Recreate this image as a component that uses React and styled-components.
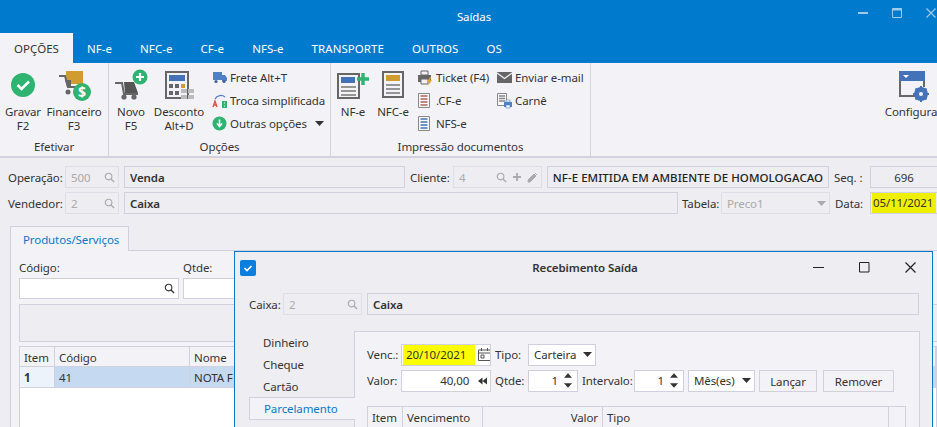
import React from 'react';
import styled, { createGlobalStyle } from 'styled-components';

const GlobalStyle = createGlobalStyle`
  html, body {
    margin: 0;
    padding: 0;
    overflow: hidden;
  }
  body {
    font-family: "Noto Sans", "Open Sans", sans-serif;
    font-size: 11.5px;
    letter-spacing: -0.1px;
    color: #333;
  }
  * {
    box-sizing: border-box;
  }
`;

const Page = styled.div`
  position: relative;
  width: 937px;
  height: 427px;
  overflow: hidden;
  background: #ededf2;
`;

const TitleBar = styled.div`
  position: relative;
  height: 33px;
  background: #007acc;
  color: #fff;
  display: flex;
  align-items: center;
  justify-content: center;
  padding-left: 11px;
`;

const WindowButtons = styled.div`
  position: absolute;
  top: 7px;
  left: 858px;
  display: flex;
  gap: 24px;
  color: #9fcaea;
`;

const TabStrip = styled.div`
  height: 30px;
  background: #007acc;
  display: flex;
  letter-spacing: 0.05px;
`;

const RibbonTab = styled.div`
  padding: 0 14px;
  display: flex;
  align-items: center;
  color: ${(p) => (p.$active ? '#333' : '#fff')};
  background: ${(p) => (p.$active ? '#f3f3f7' : 'transparent')};
`;

const Ribbon = styled.div`
  height: 95px;
  background: #f3f3f7;
  border-bottom: 2px solid #d3d3e0;
  display: flex;
  overflow: hidden;
`;

const Group = styled.div`
  width: ${(p) => p.$w}px;
  flex: none;
  display: flex;
  flex-direction: column;
  border-right: ${(p) => (p.$open ? 'none' : '1px solid #d3d3e0')};
`;

const GroupBody = styled.div`
  height: 75px;
  display: flex;
  padding-left: ${(p) => p.$pad || 0}px;
`;

const GroupCaption = styled.div`
  height: 18px;
  text-align: center;
  line-height: 18px;
`;

const LargeButton = styled.div`
  width: ${(p) => p.$w}px;
  flex: none;
  padding-top: 5px;
  display: flex;
  flex-direction: column;
  align-items: center;
  text-align: center;
  line-height: 14px;
  white-space: nowrap;
  svg {
    display: block;
    margin-bottom: 5px;
    overflow: visible;
  }
`;

const SmallColumn = styled.div`
  width: ${(p) => p.$w}px;
  flex: none;
  padding: 3px 0 0 ${(p) => p.$pad || 0}px;
  display: flex;
  flex-direction: column;
`;

const SmallItem = styled.div`
  height: 23px;
  display: flex;
  align-items: center;
  gap: 2px;
  white-space: nowrap;
  svg {
    flex: none;
  }
`;

const HeaderForm = styled.div`
  padding: 8px 0 0 8px;
  height: 68px;
  display: flex;
  flex-direction: column;
  gap: 4px;
`;

const FormRow = styled.div`
  height: 22px;
  display: flex;
  align-items: center;
  white-space: nowrap;
`;

const Label = styled.span`
  width: ${(p) => p.$w}px;
  flex: none;
`;

const Field = styled.div`
  width: ${(p) => p.$w}px;
  height: 22px;
  flex: none;
  margin-right: ${(p) => p.$mr || 0}px;
  padding: 0 ${(p) => (p.$tight ? 1 : 5)}px;
  display: flex;
  align-items: center;
  justify-content: ${(p) => p.$justify || 'flex-start'};
  gap: ${(p) => p.$gap || 3}px;
  border: 1px solid ${(p) => (p.$soft ? '#dedee8' : '#d0d0de')};
  background: ${(p) => p.$bg || 'transparent'};
  color: ${(p) => p.$color || 'inherit'};
  font-weight: ${(p) => p.$weight || 400};
  letter-spacing: ${(p) => p.$spacing || 'inherit'};
  overflow: hidden;
  > svg:last-child {
    margin-right: -2px;
  }
`;

const Grow = styled.span`
  flex: 1;
`;

const Highlight = styled.span`
  background: ${(p) => p.$bg};
  color: #333;
  height: 20px;
  line-height: 19px;
  padding-left: ${(p) => p.$indent}px;
  flex: 1;
`;

const WorkArea = styled.div`
  padding-left: 10px;
`;

const DocTab = styled.div`
  width: 119px;
  height: 25px;
  margin-bottom: -1px;
  position: relative;
  z-index: 1;
  padding-left: 12px;
  display: flex;
  align-items: center;
  color: #0a78c8;
  background: #f3f3f7;
  border: 1px solid #d0d0de;
  border-bottom: none;
`;

const DocPanel = styled.div`
  height: 180px;
  padding: 5px 0 0 8px;
  background: #f3f3f7;
  border: 1px solid #d0d0de;
  border-right: none;
`;

const LabelRow = styled.div`
  display: flex;
  height: 22px;
  align-items: center;
`;

const InputRow = styled.div`
  display: flex;
  gap: 4px;
  height: 21px;
  margin-bottom: 5px;
  > * {
    height: 21px;
  }
`;

const GrayBox = styled.div`
  height: 38px;
  margin-bottom: 4px;
  background: #ededf2;
  border: 1px solid #d0d0de;
  border-right: none;
`;

const GridCell = styled.div`
  width: ${(p) => p.$w}px;
  flex: ${(p) => (p.$w ? 'none' : 1)};
  padding: 0 4px;
  display: flex;
  align-items: center;
  justify-content: ${(p) => (p.$right ? 'flex-end' : 'flex-start')};
  border-right: 1px solid #d0d0de;
  background: ${(p) => p.$bg || 'transparent'};
  font-weight: ${(p) => (p.$bold ? 700 : 400)};
  white-space: nowrap;
`;

const GridRow = styled.div`
  height: 21px;
  display: flex;
  background: ${(p) => p.$bg || 'transparent'};
  border: 1px solid #d0d0de;
  border-top-width: ${(p) => (p.$first ? 1 : 0)}px;
  ${GridCell} {
    padding-top: 1px;
  }
`;

const GridBody = styled.div`
  height: 60px;
  background: #fff;
  border: 1px solid #d0d0de;
  border-top: none;
`;

const Modal = styled.div`
  position: absolute;
  left: 234px;
  top: 251px;
  width: 699px;
  height: 190px;
  background: #ededf2;
  border: 1px solid #0a78c8;
`;

const ModalTitle = styled.div`
  position: relative;
  height: 31px;
  display: flex;
  align-items: center;
  justify-content: center;
  padding-left: 3px;
  font-weight: 600;
  color: #333;
`;

const AppBadge = styled.div`
  position: absolute;
  left: 5px;
  top: 8px;
`;

const ModalControls = styled.div`
  position: absolute;
  left: 578px;
  top: 10px;
  display: flex;
  gap: 35px;
  color: #222;
`;

const ModalForm = styled.div`
  padding: 10px 0 0 14px;
`;

const PaymentArea = styled.div`
  display: flex;
  margin-top: 16px;
`;

const SideMenu = styled.div`
  width: 106px;
  flex: none;
  display: flex;
  flex-direction: column;
  position: relative;
  z-index: 1;
`;

const SideItem = styled.div`
  height: ${(p) => (p.$active ? 23 : 22)}px;
  padding-left: 14px;
  display: flex;
  align-items: center;
  color: ${(p) => (p.$active ? '#0a78c8' : 'inherit')};
  background: ${(p) => (p.$active ? '#f3f3f7' : 'transparent')};
  border: ${(p) => (p.$active ? '1px solid #d0d0de' : 'none')};
  border-right: none;
  margin-right: ${(p) => (p.$active ? 0 : 1)}px;
`;

const PaymentPanel = styled.div`
  width: 566px;
  height: 120px;
  flex: none;
  margin-left: -1px;
  padding: 12px 0 0 12px;
  background: #f3f3f7;
  border: 1px solid #d0d0de;
`;

const PaymentRow = styled.div`
  height: 22px;
  margin-bottom: 4px;
  display: flex;
  align-items: center;
  white-space: nowrap;
  ${Label}, ${Field} {
    padding-bottom: 1px;
  }
`;

const Button = styled.div`
  width: ${(p) => p.$w}px;
  height: 22px;
  flex: none;
  margin-right: ${(p) => p.$mr || 0}px;
  display: flex;
  align-items: center;
  justify-content: center;
  border: 1px solid #d0d0de;
  background: #f3f3f7;
`;

const SpinArrows = styled.div`
  display: flex;
  flex-direction: column;
  gap: 5px;
  margin-left: 3px;
  svg {
    display: block;
  }
`;

const InnerGrid = styled.div`
  width: 539px;
  margin-top: 14px;
  height: 40px;
  border: 1px solid #d0d0de;
  display: flex;
  ${GridCell} {
    align-items: flex-start;
    padding-top: 3px;
  }
`;

const BLUE = '#4472b8';

const Search = ({ color = '#aaa' }) => (
  <svg width="11" height="11" viewBox="0 0 12 12" fill="none" stroke={color} strokeWidth="1.2">
    <circle cx="5" cy="5" r="3.6" />
    <path d="M7.6 7.6 11 11" strokeWidth="1.5" />
  </svg>
);

const Caret = ({ color = '#333', w = 9 }) => (
  <svg width={w} height="5" viewBox="0 0 9 5">
    <path d="M0 0h9L4.5 5z" fill={color} />
  </svg>
);

const CheckCircle = () => (
  <svg width="26" height="32" viewBox="0 0 26 32">
    <circle cx="13" cy="17" r="12" fill="#2eb371" />
    <path d="M7.5 17l4 4 7.5-7.500" fill="none" stroke="#fff" strokeWidth="2.6" />
  </svg>
);

const FinanceIcon = () => (
  <svg width="34" height="32" viewBox="0 0 34 32">
    <rect x="9" y="3" width="17" height="13" fill="#d09c30" />
    <path d="M2 8h6l3 11h9" fill="none" stroke="#666" strokeWidth="2" />
    <path d="M8 12h6v7h-4z" fill="#666" />
    <circle cx="11" cy="24" r="2.5" fill="#666" />
    <circle cx="25" cy="24" r="9" fill="#2eb371" />
    <text x="25" y="29" textAnchor="middle" fill="#fff" fontSize="14" fontWeight="700" fontFamily="Noto Sans">$</text>
  </svg>
);

const NewCartIcon = () => (
  <svg width="34" height="32" viewBox="0 0 34 32">
    <path d="M1 15h7l2 11h14" fill="none" stroke="#666" strokeWidth="2" />
    <path d="M10 14h10l4 11H11z" fill="#555" />
    <circle cx="10" cy="29" r="2.6" fill="#666" />
    <circle cx="20" cy="29" r="2.6" fill="#666" />
    <circle cx="26" cy="9" r="7.500" fill="#2eb371" />
    <path d="M26 5v8M22 9h8" stroke="#fff" strokeWidth="2.2" />
  </svg>
);

const CalculatorIcon = () => (
  <svg width="32" height="32" viewBox="0 0 32 32">
    <path d="M3 4h22v26H3z" fill="#f3f3f7" stroke="#666" strokeWidth="2" />
    <rect x="6" y="7" width="16" height="6" fill={BLUE} />
    {[6, 12, 18].map((x) => <rect key={x} x={x} y="16" width="4" height="4" fill={x === 18 ? '#d09c30' : '#666'} />)}
    {[6, 12].map((x) => <rect key={x} x={x} y="23" width="4" height="4" fill="#666" />)}
    {[18, 25].map((x) => <rect key={x} x={x} y="21" width="6" height="4" fill="#bbb" />)}
    {[18, 25].map((x) => <rect key={x} x={x} y="27" width="6" height="4" fill="#bbb" />)}
  </svg>
);

const DocLines = ({ x, y, w, gap = 4, n = 3, color = '#777' }) => (
  <path
    d={Array.from({ length: n }, (_, i) => `M${x} ${y + i * gap}h${w}`).join('')}
    stroke={color}
    strokeWidth="1.6"
  />
);

const NfeIcon = () => (
  <svg width="33" height="32" viewBox="0 0 33 32">
    <path d="M1 6h21v24H1z" fill="#f3f3f7" stroke="#666" strokeWidth="2" />
    <rect x="4" y="9" width="14" height="6" fill={BLUE} />
    <DocLines x={4} y={19} w={15} />
    <path d="M26 5v12M20 11h12" stroke="#2eb371" strokeWidth="3.4" />
  </svg>
);

const NfceIcon = () => (
  <svg width="24" height="32" viewBox="0 0 24 32">
    <path d="M2 4h20v25H2z" fill="#f3f3f7" stroke="#666" strokeWidth="2" />
    <rect x="5" y="7" width="14" height="6" fill="#d09c30" />
    <DocLines x={5} y={17} w={14} />
  </svg>
);

const ConfigIcon = () => (
  <svg width="28" height="32" viewBox="0 0 28 32">
    <path d="M3 8v20h16" fill="none" stroke="#666" strokeWidth="2" />
    <path d="M27 8v11" stroke="#666" strokeWidth="2" />
    <rect x="2" y="3" width="26" height="10" fill={BLUE} />
    <path d="M6 7h6l-3 3z" fill="#fff" />
    <circle cx="24" cy="26" r="5" fill="none" stroke={BLUE} strokeWidth="4" />
    <path d="M24 18v16M16 26h16M18.500 20.500l11 11M29.500 20.500l-11 11" stroke={BLUE} strokeWidth="2" />
    <circle cx="24" cy="26" r="2" fill="#f3f3f7" />
  </svg>
);

const TruckIcon = () => (
  <svg width="16" height="13" viewBox="0 0 16 13">
    <path d="M1 1h9v8H1z" fill="#4f7fc4" />
    <path d="M10 4h3l2 3v3h-5z" fill="#4f7fc4" />
    <circle cx="4" cy="10.500" r="1.600" fill="#3b5f99" />
    <circle cx="12" cy="10.500" r="1.600" fill="#3b5f99" />
  </svg>
);

const SwapIcon = () => (
  <svg width="16" height="16" viewBox="0 0 16 16">
    <path d="M3 6C5 2 10 1.500 13 4" fill="none" stroke="#4f7fc4" strokeWidth="1.3" />
    <path d="M1 14l2-6 2 6M1.800 12h2.400" fill="none" stroke="#d9533f" strokeWidth="1.3" />
    <rect x="10" y="8" width="5" height="7" fill="#2eb371" />
    <path d="M12 10h1M12 13h1" stroke="#fff" />
  </svg>
);

const DownCircle = () => (
  <svg width="16" height="15" viewBox="0 0 16 15">
    <circle cx="7.500" cy="7.500" r="7" fill="#2eb371" />
    <path d="M7.500 3.500v6M5 7.500l2.500 3 2.500-3" fill="none" stroke="#fff" strokeWidth="1.600" />
  </svg>
);

const PrinterIcon = () => (
  <svg width="17" height="16" viewBox="0 0 17 16">
    <path d="M4 1h7v4H4z" fill="#f3f3f7" stroke="#666" />
    <path d="M1 5h13v7H1z" fill="#666" />
    <path d="M4 9h7v5H4z" fill="#f3f3f7" stroke="#666" />
    <path d="M13 7l-3 5h2l-1 4 4-6h-2l1-3z" fill="#e6a72c" />
  </svg>
);

const TinyDoc = ({ accent, n = 4 }) => (
  <svg width="14" height="15" viewBox="0 0 14 15">
    <path d="M1.500 .5h11v14h-11z" fill="#f8f8fb" stroke="#888" />
    <DocLines x={3.500} y={3} w={7} gap={3} n={n} color={accent} />
  </svg>
);

const MailIcon = () => (
  <svg width="16" height="11" viewBox="0 0 16 11">
    <rect width="15" height="11" fill="#666" />
    <path d="M0 1l7.500 5.500L15 1" fill="none" stroke="#f3f3f7" strokeWidth="1.200" />
  </svg>
);

const CarneIcon = () => (
  <svg width="16" height="16" viewBox="0 0 16 16">
    <path d="M.5.5h9v12h-9z" fill="#f8f8fb" stroke="#888" />
    <DocLines x={2} y={3} w={6} gap={2.500} color="#888" />
    <path d="M7 9h8v5H7z" fill="#4f7fc4" />
    <path d="M9 7h4v2H9zM9 12h4v3H9z" fill="#fff" stroke="#4f7fc4" strokeWidth=".6" />
  </svg>
);

const PlusGlyph = () => (
  <svg width="10" height="10" viewBox="0 0 10 10">
    <path d="M5 1v8M1 5h8" stroke="#aaa" strokeWidth="1.800" />
  </svg>
);

const PencilGlyph = () => (
  <svg width="11" height="11" viewBox="0 0 11 11">
    <path d="M1 8l6-6 2 2-6 6H1z M8 1l2 2" fill="#aaa" stroke="#aaa" />
  </svg>
);

const CalendarIcon = () => (
  <svg width="13" height="13" viewBox="0 0 13 13" fill="none" stroke="#555">
    <path d="M.5 2h12v10.500H.5zM.5 5h12M3.500 0v3M9.500 0v3" />
    <path d="M3 7h3v3H3z" />
  </svg>
);

const SpinUp = () => (
  <svg width="8" height="5" viewBox="0 0 9 5"><path d="M0 5h9L4.500 0z" fill="#333" /></svg>
);

const Rewind = () => (
  <svg width="9" height="8" viewBox="0 0 10 8">
    <path d="M5 0v8L0 4zM10 0v8L5 4z" fill="#333" />
  </svg>
);

const Spinner = ({ w, value, mr }) => (
  <Field $w={w} $mr={mr} $bg="#fff" $justify="flex-end">
    {value}
    <SpinArrows>
      <SpinUp />
      <Caret w={8} />
    </SpinArrows>
  </Field>
);

export default function App() {
  return (
    <Page>
      <GlobalStyle />
      <TitleBar>
        Saídas
        <WindowButtons>
          <svg width="10" height="12" viewBox="0 0 10 12"><path d="M0 6h10" stroke="currentColor" strokeWidth="2" /></svg>
          <svg width="10" height="12" viewBox="0 0 10 12" fill="none" stroke="currentColor"><path d="M.5 1.500h9v9h-9z" /><path d="M0 2.500h10" strokeWidth="2" /></svg>
          <svg width="10" height="12" viewBox="0 0 10 12" fill="none" stroke="currentColor" strokeWidth="1.200"><path d="M.5 1.500l9 9M9.500 1.500l-9 9" /></svg>
        </WindowButtons>
      </TitleBar>
      <TabStrip>
        <RibbonTab $active>OPÇÕES</RibbonTab>
        {['NF-e', 'NFC-e', 'CF-e', 'NFS-e', 'TRANSPORTE', 'OUTROS', 'OS'].map((t) => (
          <RibbonTab key={t}>{t}</RibbonTab>
        ))}
      </TabStrip>
      <Ribbon>
        <Group $w={109}>
          <GroupBody $pad={2}>
            <LargeButton $w={42}><CheckCircle />Gravar<br />F2</LargeButton>
            <LargeButton $w={60}><FinanceIcon />Financeiro<br />F3</LargeButton>
          </GroupBody>
          <GroupCaption>Efetivar</GroupCaption>
        </Group>
        <Group $w={222}>
          <GroupBody $pad={3}>
            <LargeButton $w={38}><NewCartIcon />Novo<br />F5</LargeButton>
            <LargeButton $w={58}><CalculatorIcon />Desconto<br />Alt+D</LargeButton>
            <SmallColumn $w={120} $pad={4}>
              <SmallItem><TruckIcon />Frete Alt+T</SmallItem>
              <SmallItem><SwapIcon />Troca simplificada</SmallItem>
              <SmallItem><DownCircle />Outras opções&nbsp;&nbsp;<Caret /></SmallItem>
            </SmallColumn>
          </GroupBody>
          <GroupCaption>Opções</GroupCaption>
        </Group>
        <Group $w={260}>
          <GroupBody $pad={1}>
            <LargeButton $w={42}><NfeIcon />NF-e</LargeButton>
            <LargeButton $w={38}><NfceIcon />NFC-e</LargeButton>
            <SmallColumn $w={85} $pad={5}>
              <SmallItem><PrinterIcon />Ticket (F4)</SmallItem>
              <SmallItem><TinyDoc accent="#b0645a" />&nbsp;.CF-e</SmallItem>
              <SmallItem><TinyDoc accent={BLUE} />&nbsp;NFS-e</SmallItem>
            </SmallColumn>
            <SmallColumn $w={90}>
              <SmallItem><MailIcon />Enviar e-mail</SmallItem>
              <SmallItem><CarneIcon />Carnê</SmallItem>
            </SmallColumn>
          </GroupBody>
          <GroupCaption>Impressão documentos</GroupCaption>
        </Group>
        <Group $w={346} $open>
          <GroupBody $pad={294}>
            <LargeButton $w={52}><ConfigIcon />Configura</LargeButton>
          </GroupBody>
        </Group>
      </Ribbon>

      <HeaderForm>
        <FormRow>
          <Label $w={57}>Operação:</Label>
          <Field $w={54} $mr={5} $soft $color="#aaa">500<Grow /><Search /></Field>
          <Field $w={281} $mr={5} $weight={600}>Venda</Field>
          <Label $w={43}>Cliente:</Label>
          <Field $w={89} $mr={5} $soft $gap={5} $color="#aaa">4<Grow /><Search /><PlusGlyph /><PencilGlyph /></Field>
          <Field $w={282} $mr={5} $tight $weight={500} $spacing="0.05px" $justify="center" $color="#222">NF-E EMITIDA EM AMBIENTE DE HOMOLOGACAO</Field>
          <Label $w={36}>Seq. :</Label>
          <Field $w={68} $justify="center">696</Field>
        </FormRow>
        <FormRow>
          <Label $w={57}>Vendedor:</Label>
          <Field $w={54} $mr={5} $soft $color="#aaa">2<Grow /><Search /></Field>
          <Field $w={554} $mr={4} $weight={600}>Caixa</Field>
          <Label $w={39}>Tabela:</Label>
          <Field $w={109} $mr={5} $soft $color="#aaa">Preco1<Grow /><Caret color="#aaa" /></Field>
          <Label $w={35}>Data:</Label>
          <Field $w={68} $tight><Highlight $bg="#eef000" $indent={1}>05/11/2021</Highlight></Field>
        </FormRow>
      </HeaderForm>

      <WorkArea>
        <DocTab>Produtos/Serviços</DocTab>
        <DocPanel>
          <LabelRow>
            <Label $w={164}>Código:</Label>
            <Label $w={60}>Qtde:</Label>
          </LabelRow>
          <InputRow>
            <Field $w={160} $bg="#fff" $justify="flex-end"><Search color="#333" /></Field>
            <Field $w={100} $bg="#fff" />
          </InputRow>
          <GrayBox />
          <GridRow $first>
            <GridCell $w={35}>Item</GridCell>
            <GridCell $w={135}>Código</GridCell>
            <GridCell>Nome</GridCell>
          </GridRow>
          <GridRow $bg="#c5daf0">
            <GridCell $w={35} $bg="#edf3fb" $bold>1</GridCell>
            <GridCell $w={135}>41</GridCell>
            <GridCell>NOTA F</GridCell>
          </GridRow>
          <GridBody />
        </DocPanel>
      </WorkArea>

      <Modal>
        <ModalTitle>
          <AppBadge>
            <svg width="16" height="16" viewBox="0 0 16 16">
              <rect width="16" height="16" rx="2" fill="#0a7fe0" />
              <path d="M4.500 8l2.500 2.500 4.500-4.500" fill="none" stroke="#fff" strokeWidth="1.600" />
            </svg>
          </AppBadge>
          Recebimento Saída
          <ModalControls>
            <svg width="11" height="11" viewBox="0 0 11 11"><path d="M0 5.500h11" stroke="currentColor" /></svg>
            <svg width="11" height="11" viewBox="0 0 11 11" fill="none"><path d="M.5.500h9.500v9.500H.5z" stroke="currentColor" /></svg>
            <svg width="11" height="11" viewBox="0 0 11 11"><path d="M.5.500l10 10M10.500.500l-10 10" stroke="currentColor" strokeWidth="1.200" /></svg>
          </ModalControls>
        </ModalTitle>
        <ModalForm>
          <FormRow>
            <Label $w={34}>Caixa:</Label>
            <Field $w={79} $mr={5} $soft $color="#aaa">2<Grow /><Search /></Field>
            <Field $w={552} $weight={600}>Caixa</Field>
          </FormRow>
          <PaymentArea>
            <SideMenu>
              <SideItem>Dinheiro</SideItem>
              <SideItem>Cheque</SideItem>
              <SideItem>Cartão</SideItem>
              <SideItem $active>Parcelamento</SideItem>
            </SideMenu>
            <PaymentPanel>
              <PaymentRow>
                <Label $w={34}>Venc.:</Label>
                <Field $w={90} $mr={4} $tight $bg="#fff">
                  <Highlight $bg="#ffff00" $indent={3}>20/10/2021</Highlight>
                  <CalendarIcon />
                </Field>
                <Label $w={33}>Tipo:</Label>
                <Field $w={68} $bg="#fff">Carteira<Grow /><Caret /></Field>
              </PaymentRow>
              <PaymentRow>
                <Label $w={34}>Valor:</Label>
                <Field $w={90} $mr={4} $bg="#fff" $justify="flex-end">40,00&nbsp;&nbsp;<Rewind /></Field>
                <Label $w={33}>Qtde:</Label>
                <Spinner w={50} value="1" mr={4} />
                <Label $w={52}>Intervalo:</Label>
                <Spinner w={50} value="1" mr={4} />
                <Field $w={67} $mr={4} $bg="#fff">Mês(es)<Grow /><Caret /></Field>
                <Button $w={58} $mr={6}>Lançar</Button>
                <Button $w={71}>Remover</Button>
              </PaymentRow>
              <InnerGrid>
                <GridCell $w={35}>Item</GridCell>
                <GridCell $w={80}>Vencimento</GridCell>
                <GridCell $w={120} $right>Valor</GridCell>
                <GridCell $w={286}>Tipo</GridCell>
              </InnerGrid>
            </PaymentPanel>
          </PaymentArea>
        </ModalForm>
      </Modal>
    </Page>
  );
}
